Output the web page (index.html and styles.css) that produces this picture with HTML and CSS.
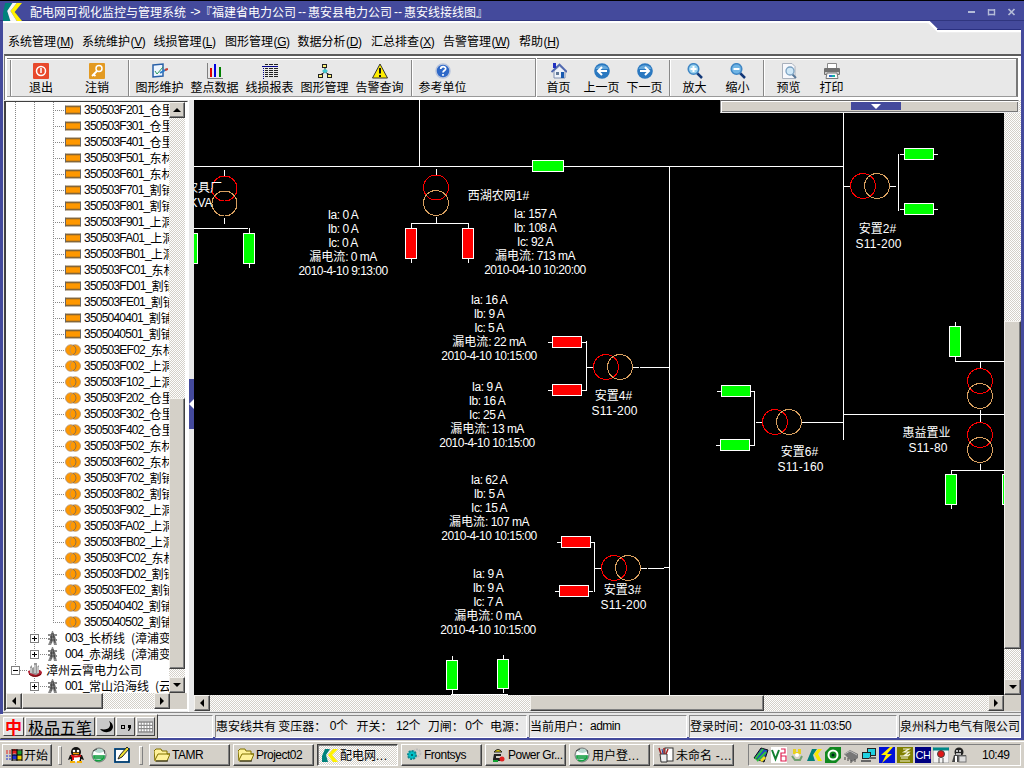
FILE: index.html
```html
<!DOCTYPE html>
<html lang="zh-CN">
<head>
<meta charset="utf-8">
<title>配电网可视化监控与管理系统</title>
<link rel="stylesheet" href="styles.css">
</head>
<body>
<svg class="defs" width="0" height="0">
  <defs>
    <symbol id="bar" viewBox="0 0 16 9"><rect width="16" height="9" fill="#b87818"/><rect width="16" height="1" fill="#555"/><rect y="8" width="16" height="1" fill="#555"/><rect width="1" height="9" fill="#666"/><rect x="15" width="1" height="9" fill="#666"/><rect x="1" y="2" width="14" height="5" fill="#ff9800"/></symbol>
    <symbol id="rings" viewBox="0 0 16 12"><g fill="#ff9800" stroke="#b09070" stroke-width=".8"><circle cx="5.800" cy="6" r="5.300"/><circle cx="10.200" cy="6" r="5.300"/></g><path d="M8 1.200a5.300 5.300 0 0 1 0 9.600" fill="none" stroke="#8a7050"/></symbol>
    <symbol id="tower" viewBox="0 0 11 16"><path d="M5 1h1l1 3h3v2H8l1 3h1v2H9l1 4H7l-1-4-2 4H1l2-5H1V8h2V6H1V4h3z" fill="#888"/><path d="M5 3l-1 10M6 3l2 10M3 7h5M3 10h5" stroke="#333" stroke-width=".7"/></symbol>
    <symbol id="firm" viewBox="0 0 16 16"><path d="M1 9c0 7 14 8 14 1l-2-2H4z" fill="#b32436"/><path d="M3 11V5l2-2v3l2-1V1h3v4l2-2v8l-3 2z" fill="#999"/><path d="M4 6v5M8 3v8M11 5v6" stroke="#eee"/><path d="M2 12c3 3 8 3 12 0" stroke="#600" fill="none"/></symbol>
    <symbol id="logo" viewBox="0 0 18 16"><path d="M2 0h7L4 7l3 9H0V9z" fill="#00827c"/><path d="M18 0h-5L7 7l6 9h5l-7-8z" fill="#fff200"/><path d="M9 0h4L7 7l6 9H7L4 7z" fill="#f8f8f8"/></symbol>
    <symbol id="folder" viewBox="0 0 16 14"><path d="M0 3l2-2h5l1 2h5v3h3l-3 7H1z" fill="#fff29a" stroke="#807000"/><path d="M1 12l3-6h12" fill="none" stroke="#807000"/><path d="M2 13h12" stroke="#222"/></symbol>
    <symbol id="globe" viewBox="0 0 16 16"><circle cx="8" cy="8" r="7" fill="#b8d8d0" stroke="#777"/><path d="M3 4c4 3 8 2 11 0l1 3C11 10 7 9 2 8z" fill="#fff"/><path d="M3 9h10v2H3zM4 13c4 2 8 0 9-3" stroke="#14a040" stroke-width="1.500" fill="none"/><path d="M2 4l4-2M13 3l1 4" stroke="#444"/></symbol>
  </defs>
</svg>

<div class="window">
  <header class="title">
    <svg class="title-logo" viewBox="0 0 18 16" preserveAspectRatio="none"><path d="M2 0h7L4 7l3 9H0V9z" fill="#00827c"/><path d="M18 0h-5L7 7l6 9h5l-7-8z" fill="#fff200"/><path d="M9 0h4L7 7l6 9H7L4 7z" fill="#f8f8f8"/></svg>
    <span>配电网可视化监控与管理系统</span><span class="arrow">-&gt;</span><span>『福建省电力公司</span><span class="dash">--</span><span>惠安县电力公司</span><span class="dash">--</span><span>惠安线接线图』</span>
    <svg class="winbtns" width="48" height="8" viewBox="0 0 48 8" fill="none" stroke="#b4bcd8" stroke-width="2"><path d="M0 4h7"/><path d="M21 2h5M20.500 1v6.500M26.500 1v6.500M21 6.500h5" stroke-width="1.400"/><path d="M40.500 1l6 6M46.500 1l-6 6" stroke-width="1.700"/></svg>
  </header>

  <main class="frame">
    <svg class="notch" width="101" height="12" viewBox="0 0 101 12"><path d="M9 0h92v9H17z" fill="#444a9c"/><path d="M7 1h2l9 9h83" fill="none" stroke="#fff" stroke-width="2.500"/><path d="M17 8.500h84" stroke="#2a3080"/></svg>
    <nav class="menu">
      <span>系统管理<i>(<u>M</u>)</i></span><span>系统维护<i>(<u>V</u>)</i></span><span>线损管理<i>(<u>L</u>)</i></span><span>图形管理<i>(<u>G</u>)</i></span><span>数据分析<i>(<u>D</u>)</i></span><span>汇总排查<i>(<u>X</u>)</i></span><span>告警管理<i>(<u>W</u>)</i></span><span>帮助<i>(<u>H</u>)</i></span>
    </nav>

    <div class="toolbar">
      <div class="tb tb-left">
        <div class="grip"></div>
        <div class="tgroup g-exit">
          <div class="tool w56"><svg viewBox="0 0 16 16"><rect width="16" height="16" rx="1" fill="#e8492c"/><circle cx="8" cy="8" r="4.500" fill="none" stroke="#fff" stroke-width="1.500"/><path d="M8 5v5" stroke="#fff" stroke-width="1.500"/></svg>退出</div>
          <div class="tool w56"><svg viewBox="0 0 16 16"><rect width="16" height="16" rx="1" fill="#e39a22"/><circle cx="10" cy="5.500" r="3" fill="none" stroke="#fff" stroke-width="1.500"/><path d="M8 8l-5 5M4.500 11.500l2 1.500" stroke="#fff" stroke-width="1.800"/></svg>注销</div>
        </div>
        <div class="tgroup g-main">
          <div class="tool w55"><svg viewBox="0 0 16 16"><path d="M1 2l10-1v12l-10 1z" fill="#eef6ff" stroke="#2860a8" stroke-width="1.500"/><path d="M3 8l2 3 6-7" stroke="#2a9a5a" fill="none"/><path d="M8 10l7-4" stroke="#2a7ac8" stroke-width="2"/><path d="M13 7l3-1" stroke="#d04030" stroke-width="2"/></svg>图形维护</div>
          <div class="tool w55"><svg viewBox="0 0 16 16"><path d="M.5 0v15.500H16" fill="none" stroke="#808080"/><rect x="3" y="5" width="2" height="9" fill="#e00000"/><rect x="7" y="1" width="2" height="13" fill="#0000e0"/><rect x="12" y="4" width="2" height="10" fill="#008000"/></svg>整点数据</div>
          <div class="tool w55"><svg viewBox="0 0 16 16"><path d="M0 3.500h16" stroke="#00008b"/><path d="M1.500 5v11" stroke="#00008b" stroke-dasharray="1 1"/><path d="M3 1.500h3m1 0h4m1 0h4M3 5.500h3m1 0h4m1 0h4M3 7.500h3m1 0h4m1 0h4M3 9.500h3m1 0h4m1 0h4M3 11.500h3m1 0h4m1 0h4M3 13.500h3m1 0h4m1 0h4" stroke="#222"/></svg>线损报表</div>
          <div class="tool w55"><svg viewBox="0 0 16 16"><path d="M8 4v4M8 9l-5 3M8 9l5 3" stroke="#222"/><g fill="#fff27a" stroke="#222"><rect x="5.500" y="1.500" width="4" height="3"/><rect x="1.500" y="11.500" width="4" height="3"/><rect x="10.500" y="11.500" width="4" height="3"/></g><path d="M8 5.500L11 8l-3 2.500L5 8z" fill="#40c8d0"/></svg>图形管理</div>
          <div class="tool w55"><svg viewBox="0 0 16 16"><path d="M8 1l7.500 14H.5z" fill="#ffee00" stroke="#333"/><path d="M8 5v5.500M8 12v2" stroke="#111" stroke-width="2"/></svg>告警查询</div>
        </div>
        <div class="tgroup g-unit">
          <div class="tool w55"><svg viewBox="0 0 16 16"><circle cx="8" cy="8" r="7" fill="#2e68c8" stroke="#b8c4dc" stroke-width="1.500"/><path d="M5.700 6c0-3 5-3 5-.3C10.700 7.500 8 7.500 8 9.500M8 11v1.700" fill="none" stroke="#fff" stroke-width="1.700"/></svg>参考单位</div>
        </div>
      </div>
      <div class="tb tb-right">
        <div class="tgroup g-page">
          <div class="tool w43"><svg viewBox="0 0 16 16"><path d="M3 8v7h11V8L8.500 3z" fill="#eef2fa" stroke="#8090b0"/><path d="M.5 9L8.500 1.500 16 9" fill="none" stroke="#5068b0" stroke-width="1.800"/><rect x="2" y="0" width="3" height="5" fill="#2030c0"/><rect x="10" y="9" width="3" height="6" fill="#1a5ab0"/><rect x="5" y="9" width="3" height="3" fill="#607898"/></svg>首页</div>
          <div class="tool w43"><svg viewBox="0 0 16 16"><circle cx="8" cy="8" r="7.800" fill="#2a78c0"/><path d="M1.500 6a7 6 0 0 1 13 0z" fill="#65a8dc"/><path d="M13 8H4M8 4L4 8l4 4" fill="none" stroke="#fff" stroke-width="2"/></svg>上一页</div>
          <div class="tool w43"><svg viewBox="0 0 16 16"><circle cx="8" cy="8" r="7.800" fill="#2a78c0"/><path d="M1.500 6a7 6 0 0 1 13 0z" fill="#65a8dc"/><path d="M3 8h9M8 4l4 4-4 4" fill="none" stroke="#fff" stroke-width="2"/></svg>下一页</div>
        </div>
        <div class="tgroup g-zoom">
          <div class="tool w43"><svg viewBox="0 0 16 16"><path d="M10 10l5 5" stroke="#123878" stroke-width="2.500"/><circle cx="6.500" cy="6" r="5.300" fill="#9bd3f0" stroke="#3f86c4" stroke-width="1.500"/><path d="M3.500 6h6M6.500 3v6" stroke="#fff" stroke-width="2"/></svg>放大</div>
          <div class="tool w43"><svg viewBox="0 0 16 16"><path d="M10 10l5 5" stroke="#123878" stroke-width="2.500"/><circle cx="6.500" cy="6" r="5.300" fill="#6fb4e4" stroke="#3f86c4" stroke-width="1.500"/><path d="M3.500 6h6" stroke="#fff" stroke-width="2"/></svg>缩小</div>
        </div>
        <div class="tgroup g-print">
          <div class="tool w43"><svg viewBox="0 0 16 16"><path d="M1.500.5H11l3 3v12H1.500z" fill="#f7f8fc" stroke="#a8b0bc"/><path d="M11 11l4 4" stroke="#587898" stroke-width="2"/><circle cx="9" cy="8" r="4" fill="#cfe8f8" stroke="#7aa0c0" stroke-width="1.300"/></svg>预览</div>
          <div class="tool w43"><svg viewBox="0 0 16 16"><path d="M3.500.5h9V6h-9z" fill="#fff" stroke="#888"/><rect y="5" width="16" height="7" rx="1" fill="#707070"/><path d="M1 10h14" stroke="#c8c8c8" stroke-width="2"/><path d="M3 10h10l1 5.500H2z" fill="#f8f8f8" stroke="#777"/><path d="M5 13h3" stroke="#2a70d0" stroke-width="2"/><path d="M8 13h3" stroke="#10b0a0" stroke-width="2"/></svg>打印</div>
        </div>
      </div>
    </div>

    <div class="work">
      <aside class="side">
        <div class="side-main">
          <div class="tree">
            <div class="leaf"><svg><use href="#bar" y="3.500" height="9"/></svg><b>350503F201_</b>仓里</div>
            <div class="leaf"><svg><use href="#bar" y="3.500" height="9"/></svg><b>350503F301_</b>仓里</div>
            <div class="leaf"><svg><use href="#bar" y="3.500" height="9"/></svg><b>350503F401_</b>仓里</div>
            <div class="leaf"><svg><use href="#bar" y="3.500" height="9"/></svg><b>350503F501_</b>东林</div>
            <div class="leaf"><svg><use href="#bar" y="3.500" height="9"/></svg><b>350503F601_</b>东林</div>
            <div class="leaf"><svg><use href="#bar" y="3.500" height="9"/></svg><b>350503F701_</b>割铺</div>
            <div class="leaf"><svg><use href="#bar" y="3.500" height="9"/></svg><b>350503F801_</b>割铺</div>
            <div class="leaf"><svg><use href="#bar" y="3.500" height="9"/></svg><b>350503F901_</b>上洞</div>
            <div class="leaf"><svg><use href="#bar" y="3.500" height="9"/></svg><b>350503FA01_</b>上洞</div>
            <div class="leaf"><svg><use href="#bar" y="3.500" height="9"/></svg><b>350503FB01_</b>上洞</div>
            <div class="leaf"><svg><use href="#bar" y="3.500" height="9"/></svg><b>350503FC01_</b>东林</div>
            <div class="leaf"><svg><use href="#bar" y="3.500" height="9"/></svg><b>350503FD01_</b>割铺</div>
            <div class="leaf"><svg><use href="#bar" y="3.500" height="9"/></svg><b>350503FE01_</b>割铺</div>
            <div class="leaf"><svg><use href="#bar" y="3.500" height="9"/></svg><b>3505040401_</b>割铺</div>
            <div class="leaf"><svg><use href="#bar" y="3.500" height="9"/></svg><b>3505040501_</b>割铺</div>
            <div class="leaf"><svg><use href="#rings" y="2" height="12"/></svg><b>350503EF02_</b>东林</div>
            <div class="leaf"><svg><use href="#rings" y="2" height="12"/></svg><b>350503F002_</b>上洞</div>
            <div class="leaf"><svg><use href="#rings" y="2" height="12"/></svg><b>350503F102_</b>上洞</div>
            <div class="leaf"><svg><use href="#rings" y="2" height="12"/></svg><b>350503F202_</b>仓里</div>
            <div class="leaf"><svg><use href="#rings" y="2" height="12"/></svg><b>350503F302_</b>仓里</div>
            <div class="leaf"><svg><use href="#rings" y="2" height="12"/></svg><b>350503F402_</b>仓里</div>
            <div class="leaf"><svg><use href="#rings" y="2" height="12"/></svg><b>350503F502_</b>东林</div>
            <div class="leaf"><svg><use href="#rings" y="2" height="12"/></svg><b>350503F602_</b>东林</div>
            <div class="leaf"><svg><use href="#rings" y="2" height="12"/></svg><b>350503F702_</b>割铺</div>
            <div class="leaf"><svg><use href="#rings" y="2" height="12"/></svg><b>350503F802_</b>割铺</div>
            <div class="leaf"><svg><use href="#rings" y="2" height="12"/></svg><b>350503F902_</b>上洞</div>
            <div class="leaf"><svg><use href="#rings" y="2" height="12"/></svg><b>350503FA02_</b>上洞</div>
            <div class="leaf"><svg><use href="#rings" y="2" height="12"/></svg><b>350503FB02_</b>上洞</div>
            <div class="leaf"><svg><use href="#rings" y="2" height="12"/></svg><b>350503FC02_</b>东林</div>
            <div class="leaf"><svg><use href="#rings" y="2" height="12"/></svg><b>350503FD02_</b>割铺</div>
            <div class="leaf"><svg><use href="#rings" y="2" height="12"/></svg><b>350503FE02_</b>割铺</div>
            <div class="leaf"><svg><use href="#rings" y="2" height="12"/></svg><b>3505040402_</b>割铺</div>
            <div class="leaf last"><svg><use href="#rings" y="2" height="12"/></svg><b>3505040502_</b>割铺</div>
            <div class="line"><i class="box plus"></i><svg><use href="#tower"/></svg><b>003_</b>长桥线<em>(漳浦变</em></div>
            <div class="line end"><i class="box plus"></i><svg><use href="#tower"/></svg><b>004_</b>赤湖线<em>(漳浦变</em></div>
            <div class="firm"><i class="box"></i><svg><use href="#firm"/></svg>漳州云霄电力公司</div>
            <div class="line sub"><i class="box plus"></i><svg><use href="#tower"/></svg><b>001_</b>常山沿海线<em>(云</em></div>
          </div>
          <div class="vbar"><div class="btn up"></div><div class="gap g1"></div><div class="thumb t1"></div><div class="gap g2"></div><div class="btn down"></div></div>
        </div>
        <div class="hbar side-h"><div class="btn left"></div><div class="thumb s1"></div><div class="gap"></div><div class="btn right"></div><div class="corner"></div></div>
      </aside>
      <div class="splitter"><div class="collapse"></div></div>
      <section class="view">
        <div class="view-main">
          <svg class="diagram" width="810" height="595" viewBox="194 100 810 595">
            <g class="wire">
              <path d="M419.500 100v66M194 166.500h649M669.500 166v529M843.500 100v340M843 414.500h161"/>
              <path d="M224.500 170v6M224.500 218v6M194 228.500h54M249.500 228v40"/>
              <path d="M436.500 169v6M436.500 217v6M411.500 263v-39.500h57V263"/>
              <path d="M548 342.500h38M586.500 341v50M548 390.500h38M586 367.500h7M632 367.500h7M640 367.500h29"/>
              <path d="M557 542.500h37.500v49M555 591.500h38M594 568.500h7M641 568.500h6M648 568.500h16M664 567.500h5"/>
              <path d="M452.500 656v39M503.500 655v38M451 694.500h57"/>
              <path d="M900 154.500h38M900 209.500h38M898.500 154v57M844 186.500h6M889 186.500h7"/>
              <path d="M955.500 322v39.500h49M980.500 361v7M980.500 410v12M980.500 464v6M951.500 509v-38.500h53"/>
              <path d="M717 391.500h37.500v54H716M756 422.500h6M801 422.500h42"/>
            </g>
            <g class="on">
              <rect x="532.500" y="160.500" width="31" height="11"/><rect x="187.500" y="233.500" width="10" height="30"/><rect x="243.500" y="233.500" width="11" height="30"/>
              <rect x="446.500" y="660.500" width="11" height="29"/><rect x="497.500" y="659.500" width="11" height="29"/>
              <rect x="904.500" y="148.500" width="29" height="11"/><rect x="904.500" y="203.500" width="29" height="11"/>
              <rect x="949.500" y="326.500" width="11" height="30"/><rect x="945.500" y="474.500" width="11" height="30"/><rect x="1002.500" y="474.500" width="11" height="30"/>
              <rect x="721.500" y="385.500" width="29" height="11"/><rect x="720.500" y="439.500" width="29" height="11"/>
            </g>
            <g class="off">
              <rect x="405.500" y="228.500" width="11" height="30"/><rect x="462.500" y="228.500" width="11" height="30"/>
              <rect x="552.500" y="336.500" width="29" height="11"/><rect x="552.500" y="384.500" width="29" height="11"/>
              <rect x="561.500" y="536.500" width="29" height="11"/><rect x="559.500" y="585.500" width="29" height="11"/>
            </g>
            <g class="coil red"><circle cx="224.500" cy="188.500" r="12.500"/><circle cx="436" cy="187.500" r="12.500"/><circle cx="606" cy="367" r="12.500"/><circle cx="614" cy="568" r="12.500"/><circle cx="863" cy="186" r="12.500"/><circle cx="980" cy="381" r="12.500"/><circle cx="980" cy="435" r="12.500"/><circle cx="775" cy="422" r="12.500"/></g>
            <g class="coil tan"><circle cx="224.500" cy="203.500" r="12.500"/><circle cx="436" cy="203" r="12.500"/><circle cx="620" cy="367" r="12.500"/><circle cx="628" cy="568" r="12.500"/><circle cx="877" cy="186" r="12.500"/><circle cx="980" cy="396" r="12.500"/><circle cx="980" cy="450" r="12.500"/><circle cx="789" cy="422" r="12.500"/></g>
            <g class="reading">
              <text x="343" y="219">Ia: 0 A</text><text x="343" y="233">Ib: 0 A</text><text x="343" y="247">Ic: 0 A</text><text x="343" y="261"><tspan>漏电流</tspan>: 0 mA</text><text x="343" y="275">2010-4-10 9:13:00</text>
              <text x="535" y="218">Ia: 157 A</text><text x="535" y="232">Ib: 108 A</text><text x="535" y="246">Ic: 92 A</text><text x="535" y="260"><tspan>漏电流</tspan>: 713 mA</text><text x="535" y="274">2010-04-10 10:20:00</text>
              <text x="489" y="304">Ia: 16 A</text><text x="489" y="318">Ib: 9 A</text><text x="489" y="332">Ic: 5 A</text><text x="489" y="346"><tspan>漏电流</tspan>: 22 mA</text><text x="489" y="360">2010-4-10 10:15:00</text>
              <text x="487" y="391">Ia: 9 A</text><text x="487" y="405">Ib: 16 A</text><text x="487" y="419">Ic: 25 A</text><text x="487" y="433"><tspan>漏电流</tspan>: 13 mA</text><text x="487" y="447">2010-4-10 10:15:00</text>
              <text x="489" y="484">Ia: 62 A</text><text x="489" y="498">Ib: 5 A</text><text x="489" y="512">Ic: 15 A</text><text x="489" y="526"><tspan>漏电流</tspan>: 107 mA</text><text x="489" y="540">2010-4-10 10:15:00</text>
              <text x="488" y="578">Ia: 9 A</text><text x="488" y="592">Ib: 9 A</text><text x="488" y="606">Ic: 7 A</text><text x="488" y="620"><tspan>漏电流</tspan>: 0 mA</text><text x="488" y="634">2010-4-10 10:15:00</text>
            </g>
            <g class="label">
              <text x="204" y="192">农具厂</text><text x="201" y="207">KVA</text>
              <text x="498.500" y="200">西湖农网1#</text>
              <text x="613.500" y="400">安置4#</text><text x="614.500" y="415" textLength="46">S11-200</text>
              <text x="622.500" y="594">安置3#</text><text x="623.500" y="609" textLength="46">S11-200</text>
              <text x="877.500" y="233">安置2#</text><text x="878.500" y="248" textLength="46">S11-200</text>
              <text x="799.500" y="456">安置6#</text><text x="800.500" y="471" textLength="46">S11-160</text>
              <text x="926.500" y="437">惠益置业</text><text x="928" y="452" textLength="39">S11-80</text>
            </g>
          </svg>
          <div class="vbar"><div class="gap v1"></div><div class="thumb"></div><div class="gap v2"></div><div class="btn down"></div></div>
        </div>
        <div class="hbar"><div class="btn left"></div><div class="gap h1"></div><div class="thumb h2"></div><div class="gap"></div><div class="btn right"></div><div class="corner"></div></div>
        <div class="dock"><span></span></div>
      </section>
    </div>

    <footer class="status">
      <div class="pane p0"></div>
      <div class="pane p1"><span class="n1">惠安线共有</span><span class="n2">变压器：</span><span class="n3"><b>0</b>个</span><span class="n4">开关：</span><span class="n5"><b>12</b>个</span><span class="n6">刀闸：</span><span class="n7"><b>0</b>个</span><span>电源：</span></div>
      <div class="pane p2">当前用户：<b>admin</b></div>
      <div class="pane p3">登录时间：<b>2010-03-31 11:03:50</b></div>
      <div class="pane p4">泉州科力电气有限公司</div>
    </footer>
  </main>
</div>

<div class="taskbar">
  <div class="task start"><svg width="17" height="16" viewBox="0 0 17 16"><path d="M6 3q2-2 5 0v4q-3-1-5 0z" fill="#e02020"/><path d="M11 3q3 1 5 0v5q-3 1-5 0z" fill="#20a030"/><path d="M6 8q2-1 5 0v5q-3-2-5 0z" fill="#2030d0"/><path d="M11 8q3 1 5 0v5q-3 1-5 0z" fill="#f0d000"/><path d="M6 2v12M11 2v12M16 2v12M6 8h10M6 13h10M6 3h10" stroke="#000" fill="none"/><path d="M0 4h5M0 6h5" stroke="#e02020" stroke-dasharray="2 1"/><path d="M0 9h5M0 12h5" stroke="#2030d0" stroke-dasharray="2 1"/></svg>开始</div>
  <div class="handle"></div>
  <div class="quick">
    <svg viewBox="0 0 16 16"><ellipse cx="8" cy="5" rx="5" ry="5" fill="#111"/><path d="M2 8h12l2 5-3-1v3H3v-3l-3 1z" fill="#111"/><ellipse cx="8" cy="11.500" rx="4" ry="3.500" fill="#fff"/><circle cx="6" cy="4" r="1.300" fill="#fff"/><circle cx="10" cy="4" r="1.300" fill="#fff"/><path d="M5 6.500h6" stroke="#f8a000" stroke-width="1.500"/><path d="M3 8.500q5 2 10 0M5 9v4" stroke="#e01010" stroke-width="2" fill="none"/><path d="M2 15h5M9 15h5" stroke="#f8b000" stroke-width="2"/></svg>
    <svg><use href="#globe"/></svg>
    <svg viewBox="0 0 16 16"><rect x="1" y="2" width="14" height="13" fill="#fff" stroke="#1878c8" stroke-width="2"/><rect x="1" y="2" width="14" height="13" fill="none" stroke="#111" stroke-width=".8"/><path d="M4 12l2-4 7-8 2 2-7 8z" fill="#f0e030" stroke="#222"/></svg>
  </div>
  <div class="handle h-b"></div>
  <div class="tasks">
    <div class="task"><svg viewBox="0 0 16 16"><use href="#folder" y="1" height="14"/></svg><b>TAMR</b></div>
    <div class="task"><svg viewBox="0 0 16 16"><use href="#folder" y="1" height="14"/></svg><b>Project02</b></div>
    <div class="task active"><svg viewBox="0 0 16 16"><path d="M3 2h5L4 8l2 7H0V9z" fill="#00827c"/><path d="M16 2h-5L6 8l5 7h5l-6-7z" fill="#fff200"/></svg><span>配电网<b>...</b></span></div>
    <div class="task"><svg viewBox="0 0 16 16"><circle cx="11" cy="6" r="3.500" fill="none" stroke="#bbb" stroke-width="2" stroke-dasharray="2 1"/><circle cx="6" cy="8" r="4" fill="#00c0c8" stroke="#108890" stroke-width="2" stroke-dasharray="2 1"/><circle cx="6" cy="8" r="1" fill="#055"/></svg><b>Frontsys</b></div>
    <div class="task"><svg viewBox="0 0 16 16"><path d="M4 5q4-5 8 0z" fill="#f0e000" stroke="#222"/><path d="M4 7h7v2H6v2h6v3H3v-2" fill="#222"/><circle cx="12" cy="12" r="2.500" fill="#e02020"/><path d="M3 14h5" stroke="#10a030" stroke-width="2"/></svg><b>Power Gr...</b></div>
    <div class="task"><svg><use href="#globe"/></svg><span>用户登<b>...</b></span></div>
    <div class="task"><svg viewBox="0 0 16 16"><rect x="7" y="1" width="8" height="13" fill="#fff" stroke="#333"/><path d="M2 7h7v8H3z" fill="#eee" stroke="#333"/><path d="M3 7L1 1M6 7V1M8 7l2-5" stroke="#a02020" stroke-width="1.500"/><path d="M5 7L4 2" stroke="#2040a0"/></svg><span>未命名<b> -...</b></span></div>
  </div>
  <div class="tray">
    <svg viewBox="0 0 16 16"><path d="M1 11l7-10 7 2-4 12z" fill="#2048c0" stroke="#111"/><path d="M2 12L10 2M4 14l9-9" stroke="#30c040" stroke-width="2"/><path d="M8 14l4-4" stroke="#f0e020" stroke-width="3"/></svg>
    <svg viewBox="0 0 16 16"><rect width="16" height="16" fill="#fff"/><path d="M1 3l3.500 9L8 3" fill="none" stroke="#108030" stroke-width="2"/><path d="M10 2h4v4h-4v3M10 9h5v5h-5zM10 7v7" fill="none" stroke="#e02050" stroke-width="1.200"/></svg>
    <svg viewBox="0 0 16 16"><path d="M4 2h3v3h2V2h3v5h-2l-2 3-2-3H4z" fill="#e8d020"/><path d="M3 9l3 4h5l2-4" fill="none" stroke="#70a070" stroke-width="2"/><circle cx="8" cy="8" r="2" fill="#fff"/></svg>
    <svg viewBox="0 0 16 16"><path d="M5 2h5l-4 6 2 6H0z" fill="#008078"/><path d="M15 2h-4L7 7l4 7h4l-4-7z" fill="#f8e800"/></svg>
    <svg viewBox="0 0 16 16"><path d="M5 0h11v11l-5 5H0V5z" fill="#108820"/><circle cx="8" cy="8" r="4.500" fill="#108820" stroke="#fff" stroke-width="2"/><circle cx="8" cy="8" r="1.500" fill="#022"/></svg>
    <svg viewBox="0 0 16 16"><path d="M1 7l6-4 8 4v4l-6 4z" fill="#777"/><path d="M2 10v3M5 11v3M8 13v3M12 12v3" stroke="#444"/><path d="M2 7l5-3 7 4" stroke="#bbb" fill="none"/></svg>
    <svg viewBox="0 0 16 16"><g stroke="#222"><rect x="6.500" y="1.500" width="8" height="7" fill="#20d0e0"/><rect x="1.500" y="5.500" width="8" height="6" fill="#20d0e0"/><path d="M0 14h10M8 11h7" stroke-width="2" stroke="#666"/></g></svg>
    <svg viewBox="0 0 16 16"><rect width="16" height="16" fill="#0010d8"/><path d="M11 0L2 8h5l-4 8 10-9H8l6-7z" fill="#ffee00"/></svg>
    <svg viewBox="0 0 16 16"><rect width="16" height="16" fill="#808000"/><path d="M6 2h6l-5 3h5l-4 3h4M3 9h8l2-2M4 11h7M3 14h10" stroke="#f4f4d8" fill="none" stroke-width="1.200"/></svg>
    <span class="lang">CH</span>
    <svg viewBox="0 0 16 16"><rect width="16" height="16" fill="#f4f4f4" stroke="#999"/><path d="M0 2h16" stroke="#088" stroke-width="3"/><circle cx="8" cy="7" r="3.500" fill="#e01818" stroke="#444"/><path d="M6 11v5M10 11v5" stroke="#555"/></svg>
    <svg viewBox="0 0 16 16"><circle cx="8" cy="5" r="4.500" fill="#222"/><path d="M3 8L1 15h8l1-5h5V8z" fill="#444"/><path d="M6 3v2M9 3v2M5 7h5" stroke="#eee" stroke-width="1.500"/><rect x="8" y="9" width="7" height="6" fill="#ddd" stroke="#777"/><path d="M5 9v6" stroke="#fff" stroke-width="2"/></svg>
    <span class="clock">10:49</span>
  </div>
</div>

<div class="ime">
  <div class="ime-c zhong">中</div>
  <div class="ime-c name">极品五笔</div>
  <div class="ime-c"><svg width="16" height="18" viewBox="1 0 16 18"><path d="M12 3c3 5 0 10-9 8 4 5 12 4 13-2 0-3-2-5-4-6z" fill="#000"/></svg></div>
  <div class="ime-c"><svg width="16" height="18" viewBox="1 0 16 18"><rect x="4.500" y="7.500" width="3" height="3" fill="none" stroke="#000"/><path d="M11 7h3v3l-2 3h-1l1-3h-1z"/></svg></div>
  <div class="ime-c"><svg width="17" height="16" viewBox="0 0 18 16"><rect x="1" y="2" width="16" height="12" fill="#888"/><path d="M2 4.500h14M2 8h14M2 11.500h14" stroke="#fff" stroke-width="2" stroke-dasharray="2 1"/></svg></div>
</div>
</body>
</html>
```
FILE: styles.css
```css
* { box-sizing: border-box; }
body {
  margin: 0;
  width: 1024px;
  height: 768px;
  overflow: hidden;
  position: relative;
  background: #d4d0c8;
  color: #000;
  font: 12px/16px "Noto Sans CJK SC", "Liberation Sans", sans-serif;
  white-space: nowrap;
}
svg { display: block; flex: none; }
.defs { position: absolute; }
b, i, em { font-weight: normal; font-style: normal; }
b, i { font-family: "Liberation Sans", sans-serif; font-size: 12px; letter-spacing: -0.5px; }

.window { height: 740px; padding: 0 3px 3px; background: #444a9c; }
.title {
  height: 21px;
  margin: 0 -3px;
  padding: 2px 8px 0 3px;
  border-top: 1px solid #000;
  border-bottom: 1px solid #30367f;
  display: flex;
  align-items: center;
  color: #fff;
}
.title-logo { width: 19px; height: 18px; margin-right: 8px; }
.arrow, .dash { font-family: "Liberation Sans", sans-serif; text-align: center; }
.arrow { width: 14px; padding-left: 4px; letter-spacing: -0.8px; }
.dash { width: 12px; }
.winbtns { margin-left: auto; margin-top: 1px; }

.frame {
  position: relative;
  height: 716px;
  border-top: 2px solid #fff;
  background: #e8e8e8;
}
.notch { position: absolute; right: 0; top: -2px; }
.menu {
  height: 31px;
  padding: 6px 0 0 5px;
  display: grid;
  grid-template-columns: 74px 71.5px 71.5px 72.5px 73.5px 72px 76px 60px;
  align-items: center;
}
.menu i { letter-spacing: -0.4px; margin-left: 0.5px; }

.toolbar {
  height: 46px;
  margin-left: 1px;
  border-top: 2px solid #5c5c5c;
  border-left: 1px solid #777;
  background: #fff;
  display: flex;
  padding: 2px 3px 3px 2px;
}
.tb {
  display: flex;
  background: #e8e8e8;
  border-top: 1px solid #777;
  border-bottom: 1px solid #999;
  box-shadow: inset 0 1px #fff;
}
.tb-left { width: 529px; border-right: 1px solid #888; padding-left: 3px; }
.tb-right { flex: 1; margin-left: 1px; border-right: 2px solid #777; }
.grip { width: 2px; border-left: 1px solid #888; margin-top: 1px; border-right: 1px solid #fff; }
.tgroup { display: flex; border-right: 1px solid #888; box-shadow: 1px 0 #fff; margin-top: 1px; }
.g-exit { width: 117px; padding-left: 1px; }
.g-main { width: 283px; padding-left: 3px; }
.g-unit { padding-left: 3px; border: 0; box-shadow: none; }
.g-page { width: 133px; }
.g-zoom { width: 94px; padding-left: 3px; }
.g-print { padding-left: 3px; border: 0; box-shadow: none; }
.tool {
  display: flex;
  flex-direction: column;
  align-items: center;
  padding-top: 3px;
  line-height: 15px;
}
.tool svg { width: 16px; height: 16px; }
.w56 { width: 56px; }
.w55 { width: 55px; }
.w43 { width: 43px; }

.work { height: 612px; display: flex; background: #e8e8e8; }
.side {
  width: 184px;
  margin: 1px 0 1px 1px;
  border: 1px solid #404040;
  border-left-width: 2px;
  border-right-color: #fff;
  border-bottom-color: #fff;
  background: #fff;
}
.side-main { display: flex; height: 591px; }
.tree { width: 163px; overflow: hidden; background: #fff; }
.tree > div {
  --dots: repeating-linear-gradient(#888 0 1px, transparent 1px 2px);
  --dash: repeating-linear-gradient(90deg, #888 0 1px, transparent 1px 2px);
  height: 16px;
  display: flex;
  align-items: center;
  background-repeat: no-repeat;
}
.tree svg { width: 16px; height: 16px; margin-right: 3px; }
.leaf {
  padding-left: 59px;
  background-image: var(--dots), var(--dots), var(--dots), var(--dash);
  background-position: 9px 0, 28px 0, 47px 0, 47px 8px;
  background-size: 1px 16px, 1px 16px, 1px 16px, 12px 1px;
}
.leaf.last { background-size: 1px 16px, 1px 16px, 1px 8px, 12px 1px; }
.leaf b { letter-spacing: -0.78px; }
.line {
  padding-left: 24px;
  background-image: var(--dots), var(--dots), var(--dash);
  background-position: 9px 0, 28px 0, 34px 8px;
  background-size: 1px 16px, 1px 16px, 8px 1px;
}
.line.end { background-size: 1px 16px, 1px 8px, 8px 1px; }
.line.sub { background-size: 0 0, 1px 16px, 8px 1px; }
.tree .line svg { width: 11px; margin: 0 7px 0 8px; }
.line b { letter-spacing: -0.7px; }
.line em { margin-left: 6px; }
.firm {
  padding-left: 5px;
  background-image: var(--dots), var(--dash);
  background-position: 9px 0, 14px 8px;
  background-size: 1px 8px, 8px 1px;
}
.tree .firm svg { margin: 0 3px 0 7px; }
.box {
  width: 9px;
  height: 9px;
  flex: none;
  border: 1px solid #808080;
  background: linear-gradient(#000, #000) 1px 3px/5px 1px no-repeat, #fff;
}
.box.plus { background: linear-gradient(#000, #000) 1px 3px/5px 1px no-repeat, linear-gradient(#000, #000) 3px 1px/1px 5px no-repeat, #fff; }

.vbar { width: 16px; display: flex; flex-direction: column; }
.hbar { height: 16px; display: flex; }
.gap { flex: 1; background: repeating-conic-gradient(#fff 0 25%, #d4d0c8 0 50%) 0 0/2px 2px; }
.thumb, .btn {
  background: #d4d0c8;
  border: 1px solid;
  border-color: #f4f2ee #404040 #404040 #f4f2ee;
  box-shadow: inset -1px -1px #808080;
}
.btn { width: 16px; height: 16px; flex: none; display: flex; align-items: center; justify-content: center; }
.btn::after { content: ""; border: 4px solid transparent; }
.up::after { border-top: 0; border-bottom-color: #000; }
.down::after { border-bottom: 0; border-top-color: #000; }
.left::after { border-left: 0; border-right-color: #000; }
.right::after { border-right: 0; border-left-color: #000; }
.g1, .v1, .h1 { flex: none; }
.g1 { height: 280px; }
.t1 { height: 271px; }
.s1 { width: 81px; }
.corner { width: 17px; background: #d4d0c8; }
.side-h .gap { flex: none; width: 51px; }
.side-h .corner { flex: 1; }

.splitter { width: 6px; padding-top: 279px; border-left: 1px solid #fff; background: #e8e8e8; }
.collapse { width: 5px; height: 50px; background: #444a9c; display: flex; align-items: center; }
.collapse::after { content: ""; border: 5px solid transparent; border-right-color: #fff; border-left: 0; }

.view { position: relative; flex: 1; }
.view-main { display: flex; height: 595px; }
.view .vbar { width: 17px; }
.view .vbar .btn { width: 17px; }
.v1 { height: 221px; }
.view .vbar .thumb { height: 328px; }
.h1 { width: 320px; }
.h2 { width: 234px; }
.diagram { background: #000; }
.wire { stroke: #fff; fill: none; shape-rendering: crispEdges; }
.on, .off { stroke: #fff; shape-rendering: crispEdges; }
.on { fill: #0f0; }
.off { fill: #f00; }
.coil { fill: none; stroke-width: 1; shape-rendering: crispEdges; }
.red { stroke: #f00; }
.tan { stroke: #d8a060; }
.reading, .label { fill: #fff; text-anchor: middle; }
.reading { font: 12px "Liberation Sans", "Noto Sans CJK SC", sans-serif; letter-spacing: -0.52px; }
.reading tspan { letter-spacing: 0; }
.label { font: 12px "Liberation Sans", "Noto Sans CJK SC", sans-serif; }
.dock {
  position: absolute;
  left: 526px;
  top: 0;
  width: 299px;
  height: 13px;
  padding: 1px;
  border: 1px solid #eee;
  border-top-color: #666;
  border-left-color: #888;
  background: #d4d0c8;
  box-shadow: inset 1px 1px #fff, inset -1px -1px #777;
}
.dock span { display: flex; justify-content: center; align-items: center; width: 50px; height: 8px; margin-left: 129px; background: #444a9c; }
.dock span::after { content: ""; border: 5px solid transparent; border-top-color: #fff; border-bottom: 0; }

.status { height: 25px; padding-top: 2px; border-top: 1px solid #888; display: flex; gap: 2px; }
.pane {
  height: 23px;
  padding-bottom: 2px;
  display: flex;
  align-items: center;
  overflow: hidden;
  border: 1px solid #888;
  border-right-color: #fff;
  border-bottom-color: #fff;
}
.p0 { width: 210px; }
.p1 { width: 312px; }
.p2 { width: 158px; }
.p3 { width: 208px; }
.p4 { flex: 1; }
.n1 { width: 63px; }
.n2 { width: 52px; }
.n3 { width: 27px; }
.n4 { width: 40px; }
.n5 { width: 32px; }
.n6 { width: 38px; }
.n7 { width: 25px; }

.taskbar {
  height: 28px;
  display: flex;
  align-items: center;
  padding: 3px 3px 2px 2px;
  border-top: 1px solid #d4d0c8;
  box-shadow: inset 0 1px #fff;
}
.task {
  width: 81px;
  height: 22px;
  flex: none;
  display: flex;
  align-items: center;
  gap: 2px;
  padding-left: 4px;
  border: 1px solid;
  border-color: #fff #404040 #404040 #fff;
  box-shadow: inset -1px -1px #808080;
}
.task svg { width: 16px; height: 16px; }
.task.active {
  border-color: #404040 #fff #fff #404040;
  box-shadow: inset 1px 1px #808080;
  background: repeating-conic-gradient(#fff 0 25%, #d4d0c8 0 50%) 0 0/2px 2px;
}
.task span b { letter-spacing: 0.5px; }
.task.start { width: 50px; padding-left: 3px; gap: 1px; }
.task.start svg { width: 17px; }
.handle { width: 4px; height: 19px; margin-left: 6px; border: 1px solid #fff; border-right-color: #808080; border-bottom-color: #808080; flex: none; }
.quick { display: flex; gap: 7px; margin-left: 6px; }
.quick svg { width: 16px; height: 16px; }
.h-b { margin-left: 9px; }
.tasks { display: flex; gap: 3px; margin-left: 6px; }
.tray {
  margin-left: auto;
  width: 273px;
  height: 22px;
  display: flex;
  align-items: center;
  gap: 2px;
  padding-left: 4px;
  border: 1px solid #808080;
  border-right-color: #fff;
  border-bottom-color: #fff;
}
.tray svg { width: 16px; height: 16px; }
.lang { width: 16px; height: 16px; background: #000080; color: #fff; font-family: "Liberation Sans", sans-serif; font-size: 11px; letter-spacing: -0.5px; text-align: center; }
.clock { margin-left: 13px; font-family: "Liberation Sans", sans-serif; font-size: 12px; letter-spacing: -0.5px; }

.ime {
  position: absolute;
  left: 0;
  top: 714px;
  width: 158px;
  height: 25px;
  padding: 2px;
  display: flex;
  gap: 1px;
  background: #d4d0c8;
  border: 1px solid;
  border-color: #fff #404040 #404040 #d4d0c8;
}
.ime-c {
  width: 19px;
  display: flex;
  align-items: center;
  justify-content: center;
  background: #c8c8c8;
  border: 1px solid;
  border-color: #fff #444 #444 #fff;
}
.zhong { width: 21px; color: #f00; font-size: 17px; font-weight: bold; background: #e4e4e4; }
.name { width: 71px; font-size: 16px; }
```
